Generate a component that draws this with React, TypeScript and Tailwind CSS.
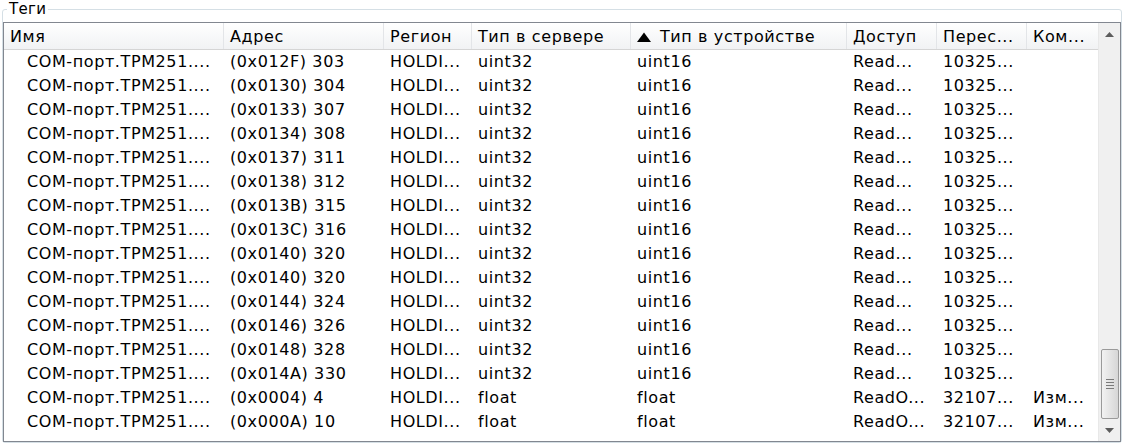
import React from 'react';

type Row = {
    name: string;
    addr: string;
    region: string;
    srv: string;
    dev: string;
    access: string;
    resend: string;
    comment: string;
};

const mk = (addr: string, srv = 'uint32', dev = 'uint16', access = 'Read...', resend = '10325...', comment = ''): Row => ({
    name: 'COM-порт.TPM251....',
    addr,
    region: 'HOLDI...',
    srv,
    dev,
    access,
    resend,
    comment,
});

const rows: Row[] = [
    mk('(0x012F) 303'),
    mk('(0x0130) 304'),
    mk('(0x0133) 307'),
    mk('(0x0134) 308'),
    mk('(0x0137) 311'),
    mk('(0x0138) 312'),
    mk('(0x013B) 315'),
    mk('(0x013C) 316'),
    mk('(0x0140) 320'),
    mk('(0x0140) 320'),
    mk('(0x0144) 324'),
    mk('(0x0146) 326'),
    mk('(0x0148) 328'),
    mk('(0x014A) 330'),
    mk('(0x0004) 4', 'float', 'float', 'ReadO...', '32107...', 'Изм...'),
    mk('(0x000A) 10', 'float', 'float', 'ReadO...', '32107...', 'Изм...'),
];

const cols = 'grid grid-cols-[220px_160px_88px_159px_216px_90px_90px_69px]';

const HeadCell = ({ children, last }: { children: React.ReactNode; last?: boolean }) => (
    <div className={`flex items-center pl-[6px] pt-[2px] whitespace-nowrap overflow-hidden ${last ? '' : 'border-r border-[#e3e5e8]'}`}>
        {children}
    </div>
);

const Cell = ({ children, className = '' }: { children: React.ReactNode; className?: string }) => (
    <div className={`flex items-center pl-[6px] whitespace-nowrap overflow-hidden ${className}`}>{children}</div>
);

export default function App() {
    return (
        <div className="w-[1124px] h-[444px] bg-white text-black font-['DejaVu_Sans',Verdana,sans-serif] text-[16px] tracking-[0.6px] overflow-hidden">
            <fieldset className="mx-[2px] w-[1120px] h-[443px] border border-[#d5dfe5] rounded-[3px] min-w-0">
                <legend className="ml-[4px] px-[2px] h-[18px] leading-[18px] text-[15px] tracking-[0.3px]">Теги</legend>

                {/* List view */}
                <div className="mt-[4px] h-[420px] border border-[#828790] flex">
                    <div className="flex-1 flex flex-col min-w-0">
                        <div className={`${cols} h-[27px] bg-gradient-to-b from-white to-[#f1f2f4] border-b border-[#d5d5d5]`}>
                            <HeadCell>Имя</HeadCell>
                            <HeadCell>Адрес</HeadCell>
                            <HeadCell>Регион</HeadCell>
                            <HeadCell>Тип в сервере</HeadCell>
                            <HeadCell>
                                <svg width="14" height="10" viewBox="0 0 14 10" className="mr-[9px] shrink-0">
                                    <path d="M0 10 L7 0.5 L14 10 Z" fill="#000" />
                                </svg>
                                Тип в устройстве
                            </HeadCell>
                            <HeadCell>Доступ</HeadCell>
                            <HeadCell>Перес...</HeadCell>
                            <HeadCell last>Ком...</HeadCell>
                        </div>
                        <div className="flex flex-col">
                            {rows.map((r, i) => (
                                <div key={i} className={`${cols} h-[24px]`}>
                                    <Cell className="pl-[23px]">{r.name}</Cell>
                                    <Cell>{r.addr}</Cell>
                                    <Cell>{r.region}</Cell>
                                    <Cell>{r.srv}</Cell>
                                    <Cell>{r.dev}</Cell>
                                    <Cell>{r.access}</Cell>
                                    <Cell>{r.resend}</Cell>
                                    <Cell>{r.comment}</Cell>
                                </div>
                            ))}
                        </div>
                    </div>

                    {/* Scrollbar */}
                    <div className="w-[22px] bg-[#f0f0f0] border-l border-[#e8e8e8] flex flex-col items-center">
                        <div className="h-[22px] w-full flex items-center justify-center">
                            <svg width="9" height="5" viewBox="0 0 9 5">
                                <path d="M0 5 L4.5 0 L9 5 Z" fill="#5c5c5c" />
                            </svg>
                        </div>
                        <div className="flex-1 w-full" />
                        <div className="h-[70px] w-[18px] rounded-[2px] border border-[#9a9a9a] bg-gradient-to-r from-[#f2f2f2] via-[#e4e4e4] to-[#d6d6d6] flex flex-col items-center justify-center gap-[2px]">
                            <div className="w-[8px] h-px bg-[#7a7a7a]" />
                            <div className="w-[8px] h-px bg-[#7a7a7a]" />
                            <div className="w-[8px] h-px bg-[#7a7a7a]" />
                            <div className="w-[8px] h-px bg-[#7a7a7a]" />
                        </div>
                        <div className="h-[22px] w-full flex items-center justify-center">
                            <svg width="9" height="5" viewBox="0 0 9 5">
                                <path d="M0 0 L4.5 5 L9 0 Z" fill="#5c5c5c" />
                            </svg>
                        </div>
                    </div>
                </div>
            </fieldset>
        </div>
    );
}
